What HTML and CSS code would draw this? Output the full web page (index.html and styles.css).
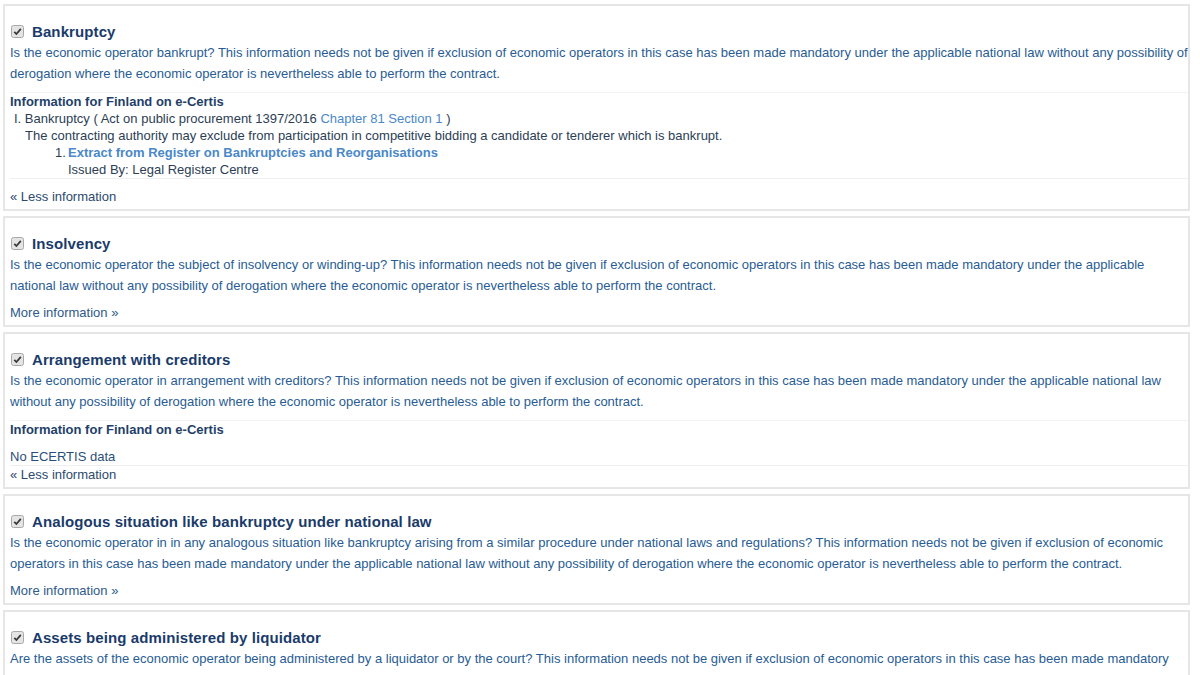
FILE: index.html
```html
<!DOCTYPE html>
<html>
<head>
<meta charset="utf-8">
<link rel="stylesheet" href="styles.css">
</head>
<body>
<div class="list">
  <section class="panel">
    <h3 class="title"><svg class="chk" viewBox="0 0 13 13"><rect x="0.5" y="0.5" width="12" height="12" rx="2" fill="#e4e4e4" stroke="#a8a8a8"/><path d="M3.3 6.8 L5.4 9 L9.8 3.8" fill="none" stroke="#3a3a3a" stroke-width="1.8"/></svg>Bankruptcy</h3>
    <p class="desc">Is the economic operator bankrupt? This information needs not be given if exclusion of economic operators in this case has been made mandatory under the applicable national law without any possibility of derogation where the economic operator is nevertheless able to perform the contract.</p>
    <div class="ecertis">
      <div class="ec-head">Information for Finland on e-Certis</div>
      <div class="ec-item">I. Bankruptcy ( Act on public procurement 1397/2016 <a class="lnk">Chapter 81 Section 1</a> )</div>
      <div class="ec-text">The contracting authority may exclude from participation in competitive bidding a candidate or tenderer which is bankrupt.</div>
      <div class="ec-ev"><span class="num">1.</span><div><a class="lnk bold">Extract from Register on Bankruptcies and Reorganisations</a><div>Issued By: Legal Register Centre</div></div></div>
    </div>
    <div class="toggle">« Less information</div>
  </section>

  <section class="panel">
    <h3 class="title"><svg class="chk" viewBox="0 0 13 13"><rect x="0.5" y="0.5" width="12" height="12" rx="2" fill="#e4e4e4" stroke="#a8a8a8"/><path d="M3.3 6.8 L5.4 9 L9.8 3.8" fill="none" stroke="#3a3a3a" stroke-width="1.8"/></svg>Insolvency</h3>
    <p class="desc">Is the economic operator the subject of insolvency or winding-up? This information needs not be given if exclusion of economic operators in this case has been made mandatory under the applicable national law without any possibility of derogation where the economic operator is nevertheless able to perform the contract.</p>
    <div class="toggle more">More information »</div>
  </section>

  <section class="panel">
    <h3 class="title"><svg class="chk" viewBox="0 0 13 13"><rect x="0.5" y="0.5" width="12" height="12" rx="2" fill="#e4e4e4" stroke="#a8a8a8"/><path d="M3.3 6.8 L5.4 9 L9.8 3.8" fill="none" stroke="#3a3a3a" stroke-width="1.8"/></svg>Arrangement with creditors</h3>
    <p class="desc">Is the economic operator in arrangement with creditors? This information needs not be given if exclusion of economic operators in this case has been made mandatory under the applicable national law without any possibility of derogation where the economic operator is nevertheless able to perform the contract.</p>
    <div class="ecertis empty">
      <div class="ec-head">Information for Finland on e-Certis</div>
      <div class="ec-none">No ECERTIS data</div>
    </div>
    <div class="toggle tight">« Less information</div>
  </section>

  <section class="panel">
    <h3 class="title"><svg class="chk" viewBox="0 0 13 13"><rect x="0.5" y="0.5" width="12" height="12" rx="2" fill="#e4e4e4" stroke="#a8a8a8"/><path d="M3.3 6.8 L5.4 9 L9.8 3.8" fill="none" stroke="#3a3a3a" stroke-width="1.8"/></svg>Analogous situation like bankruptcy under national law</h3>
    <p class="desc">Is the economic operator in in any analogous situation like bankruptcy arising from a similar procedure under national laws and regulations? This information needs not be given if exclusion of economic operators in this case has been made mandatory under the applicable national law without any possibility of derogation where the economic operator is nevertheless able to perform the contract.</p>
    <div class="toggle more">More information »</div>
  </section>

  <section class="panel">
    <h3 class="title"><svg class="chk" viewBox="0 0 13 13"><rect x="0.5" y="0.5" width="12" height="12" rx="2" fill="#e4e4e4" stroke="#a8a8a8"/><path d="M3.3 6.8 L5.4 9 L9.8 3.8" fill="none" stroke="#3a3a3a" stroke-width="1.8"/></svg>Assets being administered by liquidator</h3>
    <p class="desc">Are the assets of the economic operator being administered by a liquidator or by the court? This information needs not be given if exclusion of economic operators in this case has been made mandatory under the applicable national law without any possibility of derogation where the economic operator is nevertheless able to perform the contract.</p>
    <div class="toggle more">More information »</div>
  </section>
</div>
</body>
</html>
```

FILE: styles.css
```css
html, body {
  margin: 0;
  padding: 0;
  background: #ffffff;
}
body {
  font-family: "Liberation Sans", Arial, sans-serif;
  font-size: 13px;
  color: #2c3e55;
}
.list {
  padding: 4px 10px 0 3px;
  display: flex;
  flex-direction: column;
  gap: 5px;
}
.panel {
  border: 2px solid #e6e6e6;
  padding: 14px 0 4px 5px;
}
.title {
  display: flex;
  align-items: center;
  margin: 0;
  height: 22px;
  font-size: 15px;
  font-weight: bold;
  color: #1a3b6a;
  letter-spacing: 0.1px;
}
.chk {
  width: 13px;
  height: 13px;
  margin: 0 8px 0 1px;
  flex: none;
}
.desc {
  margin: 0;
  line-height: 21px;
  font-size: 13px;
  color: #285c94;
}
.ecertis {
  margin-top: 8px;
  line-height: 17px;
  border-top: 1px solid #f4f4f4;
  border-bottom: 1px solid #efefef;
  color: #2c3e55;
}
.ec-head {
  font-weight: bold;
  color: #1f3f6a;
}
.ec-item {
  padding-left: 4px;
}
.ec-text {
  padding-left: 15px;
}
.ec-ev {
  display: flex;
  padding-left: 45px;
}
.ec-ev .num {
  width: 13px;
  flex: none;
}
.lnk {
  color: #4a88c8;
}
.bold {
  font-weight: bold;
}
.ecertis.empty .ec-none {
  margin-top: 10px;
  color: #2a4f7a;
}
.toggle {
  margin-top: 9px;
  line-height: 17px;
  color: #2c4a6e;
}
.toggle.more {
  margin-top: 8px;
  color: #2d5a88;
}
.toggle.tight {
  margin-top: 0;
}
```
